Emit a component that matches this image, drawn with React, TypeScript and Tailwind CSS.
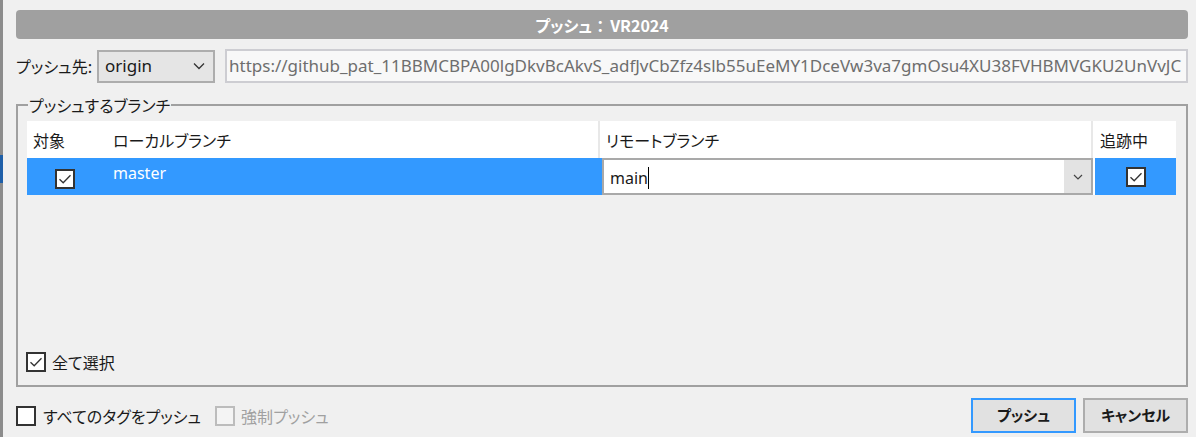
import React from "react";

function Check({ checked = false, disabled = false }: { checked?: boolean; disabled?: boolean }) {
  return (
    <div
      className={
        "w-[20px] h-[20px] border-2 flex items-center justify-center shrink-0 " +
        (disabled ? "border-[#bcbcbc] bg-[#f4f4f4]" : "border-[#333333] bg-white")
      }
    >
      {checked && (
        <svg width="16" height="16" viewBox="0 0 16 16">
          <path d="M2.5 8.2 L6.2 11.8 L13.5 4.2" fill="none" stroke="#333333" strokeWidth="1.3" />
        </svg>
      )}
    </div>
  );
}

function Chevron() {
  return (
    <svg width="12" height="8" viewBox="0 0 12 8">
      <path d="M1 1.5 L6 6.5 L11 1.5" fill="none" stroke="#333333" strokeWidth="1.3" />
    </svg>
  );
}

const jp = "font-['Noto_Sans_CJK_JP',sans-serif] [font-feature-settings:'palt'] text-[16px] whitespace-nowrap";

export default function App() {
  return (
    <div className="w-[1196px] h-[437px] bg-[#f0f0f0] flex overflow-hidden font-['Noto_Sans','Noto_Sans_CJK_JP',sans-serif] text-[#1a1a1a]">
      <div className="w-[3px] h-full flex flex-col bg-[#8c8c8c]">
        <div className="h-[155px]" />
        <div className="h-[28px] bg-[#1f5fa8]" />
      </div>
      <div className="flex-1 pl-[13px] pr-[8px] flex flex-col">
        {/* title */}
        <div className={"mt-[10px] h-[29px] rounded-[4px] bg-[#a0a0a0] flex items-center justify-center text-white font-bold " + jp}>
          プッシュ<span className="[font-feature-settings:normal] mr-[2px]">：</span>VR2024
        </div>
        {/* destination row */}
        <div className="mt-[10px] h-[34px] flex items-center">
          <div className={"w-[81px] " + jp}>プッシュ先:</div>
          <div className="w-[118px] h-[33px] bg-[#e5e5e5] border-2 border-[#adadad] flex items-center justify-between pl-[6px] pr-[8px] text-[17px]">
            <span>origin</span>
            <Chevron />
          </div>
          <div className="ml-[10px] flex-1 h-[34px] border-2 border-[#cdcdd2] bg-[#f8f8f8] flex items-center pl-[2px] overflow-hidden">
            <span className="text-[17px] text-[#6e6e6e] whitespace-nowrap">
              https://github_pat_11BBMCBPA00lgDkvBcAkvS_adfJvCbZfz4slb55uEeMY1DceVw3va7gmOsu4XU38FVHBMVGKU2UnVvJC
            </span>
          </div>
        </div>
        {/* group */}
        <fieldset className="mt-[11px] h-[293px] border-2 border-[#a0a0a0] pl-[9px] pr-[10px] pt-[5px]">
          <legend className={"ml-[1px] px-[1px] leading-[22px] " + jp}>プッシュするブランチ</legend>
          <div className="flex flex-col h-[253px]">
            {/* header */}
            <div className={"h-[37px] bg-white flex items-center " + jp}>
              <div className="w-[86px] pl-[6px]">対象</div>
              <div className="w-[487px] h-full flex items-center border-r-2 border-[#e8e8e8]">ローカルブランチ</div>
              <div className="w-[493px] h-full flex items-center pl-[6px] border-r-2 border-[#e8e8e8]">リモートブランチ</div>
              <div className="flex-1 pl-[7px]">追跡中</div>
            </div>
            {/* row */}
            <div className="h-[37px] bg-[#3399ff] flex items-stretch">
              <div className="w-[86px] flex items-end justify-start pb-[6px] pl-[28px]">
                <Check checked />
              </div>
              <div className="w-[489px] text-white text-[16px] pt-[3px]">master</div>
              <div className="w-[491px] bg-white border-2 border-[#a9a9a9] flex items-stretch">
                <div className="flex-1 flex items-center pl-[6px] pt-[3px] text-[16px]">
                  <span>main</span>
                  <span className="w-[1px] h-[22px] bg-black" />
                </div>
                <div className="w-[27px] bg-[#e3e3e3] flex items-center justify-center">
                  <svg width="10" height="6" viewBox="0 0 10 6">
                    <path d="M1 1 L5 5 L9 1" fill="none" stroke="#444444" strokeWidth="1.2" />
                  </svg>
                </div>
              </div>
              <div className="flex-1 flex items-center justify-center border-l-2 border-white">
                <Check checked />
              </div>
            </div>
            <div className="flex-1" />
            <div className="flex items-center gap-[6px] -ml-[1px]">
              <Check checked />
              <span className={jp}>全て選択</span>
            </div>
          </div>
        </fieldset>
        {/* bottom */}
        <div className={"mt-[11px] h-[35px] flex items-center " + jp}>
          <Check />
          <span className="ml-[7px]">すべてのタグをプッシュ</span>
          <div className="ml-[14px]">
            <Check disabled />
          </div>
          <span className="ml-[6px] text-[#a0a0a0]">強制プッシュ</span>
          <div className="flex-1" />
          <button className="w-[105px] h-[35px] bg-[#e1e1e1] border-2 border-[#3399ff] font-bold text-[15px]">
            プッシュ
          </button>
          <button className="ml-[7px] w-[105px] h-[35px] bg-[#e1e1e1] border-2 border-[#adadad] font-bold text-[15px]">
            キャンセル
          </button>
        </div>
      </div>
    </div>
  );
}
